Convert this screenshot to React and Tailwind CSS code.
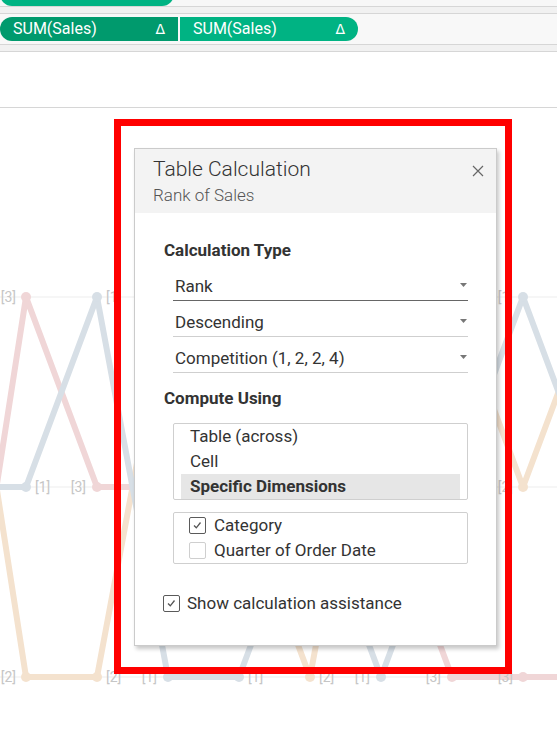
import React from "react";

const T = 189;
const M = 379;
const B = 569;

const xs = [-33, 26, 97, 168, 239, 310, 381, 452, 523, 594];

const series = [
  { name: "orange", color: "#f4e2ce", ys: [T, B, B, T, M, B, T, T, M, T] },
  { name: "red", color: "#f0d6d7", ys: [B, T, M, M, T, T, M, B, B, B] },
  { name: "blue", color: "#d7dfe6", ys: [M, M, T, B, B, M, B, M, T, M] },
];

const labels = [
  [16, T, "[3]", "end"],
  [35, M, "[1]", "start"],
  [16, B, "[2]", "end"],
  [106, T, "[1]", "start"],
  [86, M, "[3]", "end"],
  [106, B, "[2]", "start"],
  [157, B, "[1]", "end"],
  [248, B, "[1]", "start"],
  [319, B, "[2]", "start"],
  [370, B, "[1]", "end"],
  [441, B, "[3]", "end"],
  [513, B, "[3]", "end"],
  [513, T, "[1]", "end"],
  [513, M, "[2]", "end"],
];

const Pill = ({ className }) => (
  <div
    className={`h-[24px] w-[178px] shrink-0 flex items-center justify-between pl-[13px] pr-[13px] text-[16px] text-white ${className}`}
  >
    <span>SUM(Sales)</span>
    <span className="font-['DejaVu_Sans',sans-serif] text-[14px]">Δ</span>
  </div>
);

const Caret = () => (
  <svg width="7" height="4" viewBox="0 0 7 4" className="mb-[2px]">
    <path d="M0 0 L7 0 L3.5 4 Z" fill="#777" />
  </svg>
);

const Check = ({ checked }) => (
  <div
    className={`w-[17px] h-[17px] shrink-0 rounded-[2px] border bg-white flex items-center justify-center ${
      checked ? "border-[#5a5a5a]" : "border-[#cfcfcf]"
    }`}
  >
    {checked && (
      <svg width="15" height="15" viewBox="0 0 15 15">
        <path
          d="M4 7.5 L6.3 9.8 L10.5 4.5"
          fill="none"
          stroke="#555"
          strokeWidth="1.3"
        />
      </svg>
    )}
  </div>
);

const Select = ({ value, active }) => (
  <div
    className={`h-[36px] flex items-end justify-between pb-[4px] pl-[2px] pr-[1px] border-b ${
      active ? "border-[#666]" : "border-[#cfcfcf]"
    }`}
  >
    <span className="leading-[20px]">{value}</span>
    <div className="h-[20px] flex items-center">
      <Caret />
    </div>
  </div>
);

const Chart = () => (
  <svg width="557" height="633" viewBox="0 0 557 633" className="block">
    {[T, M, B].map((y) => (
      <line key={y} x1="0" x2="557" y1={y} y2={y} stroke="#ededed" strokeWidth="1" />
    ))}
    {series.map((s) => (
      <g key={s.name}>
        <polyline
          points={xs.map((x, i) => `${x},${s.ys[i]}`).join(" ")}
          fill="none"
          stroke={s.color}
          strokeWidth="6"
          strokeLinejoin="round"
          strokeLinecap="round"
        />
        {xs.map((x, i) => (
          <circle key={i} cx={x} cy={s.ys[i]} r="5" fill={s.color} />
        ))}
      </g>
    ))}
    {labels.map(([x, y, t, a], i) => (
      <text
        key={i}
        x={x}
        y={y + 5}
        textAnchor={a}
        fontSize="14"
        fill="#c6c6c6"
        fontFamily="Roboto, sans-serif"
      >
        {t}
      </text>
    ))}
  </svg>
);

export default function App() {
  return (
    <div className="w-[557px] h-[741px] overflow-hidden bg-white font-['Roboto','Noto_Sans',sans-serif] text-[#333]">
      {/* shelves */}
      <div className="h-[6px] bg-[#f7f7f7] flex items-end overflow-hidden">
        <div className="h-[24px] w-[174px] shrink-0 rounded-full bg-[#00b383]" />
      </div>
      <div className="h-[7px] bg-[#f1f1f1] border-t border-[#d6d6d6]" />
      <div className="h-[31px] bg-[#f8f8f8] border-t border-[#d6d6d6] pt-[3px] flex gap-[2px]">
        <Pill className="bg-[#009a6d] rounded-l-full" />
        <Pill className="bg-[#00b383] rounded-r-full" />
      </div>
      <div className="h-[7px] bg-[#f1f1f1] border-t border-[#d6d6d6]" />
      <div className="h-[57px] bg-white border-t border-b border-[#d6d6d6]" />

      {/* view */}
      <div className="relative">
        <Chart />

        <div className="absolute left-[134px] top-[40px] w-[363px] bg-white border border-[#cbcbcb] shadow-[2px_3px_4px_rgba(0,0,0,0.22)]">
          <div className="h-[64px] bg-[#f3f3f3] flex justify-between pl-[18px] pr-[12px] pt-[8px]">
            <div>
              <div className="text-[21px] leading-[24px] font-light text-[#333]">Table Calculation</div>
              <div className="mt-[4px] text-[17px] leading-[20px] font-light text-[#555]">Rank of Sales</div>
            </div>
            <svg width="12" height="12" viewBox="0 0 12 12" className="mt-[8px]">
              <path d="M1 1 L11 11 M11 1 L1 11" stroke="#666" strokeWidth="1.2" />
            </svg>
          </div>

          <div className="pl-[28px] pr-[28px] pb-[30px] text-[17px]">
            <div className="mt-[27px] leading-[20px] font-bold pl-[1px]">
              Calculation Type
            </div>
            <div className="mt-[5px] ml-[10px]">
              <Select value="Rank" active />
              <Select value="Descending" />
              <Select value="Competition (1, 2, 2, 4)" />
            </div>

            <div className="mt-[15px] leading-[20px] font-bold pl-[1px]">
              Compute Using
            </div>
            <div className="mt-[15px] ml-[10px] border border-[#cfcfcf] rounded-[2px] px-[7px]">
              <div className="h-[25px] leading-[25px] pl-[9px]">Table (across)</div>
              <div className="h-[25px] leading-[25px] pl-[9px]">Cell</div>
              <div className="h-[25px] leading-[25px] pl-[9px] bg-[#e6e6e6] font-bold">
                Specific Dimensions
              </div>
            </div>

            <div className="mt-[12px] ml-[10px] border border-[#cfcfcf] rounded-[2px] pl-[15px]">
              <div className="h-[25px] flex items-center gap-[8px]">
                <Check checked />
                <span className="leading-[25px]">Category</span>
              </div>
              <div className="h-[25px] flex items-center gap-[8px]">
                <Check />
                <span className="leading-[25px]">Quarter of Order Date</span>
              </div>
            </div>

            <div className="mt-[27px] h-[24px] flex items-center gap-[7px]">
              <Check checked />
              <span className="leading-[24px]">Show calculation assistance</span>
            </div>
          </div>
        </div>

        <div className="absolute left-[114px] top-[11px] w-[398px] h-[555px] border-[7px] border-[#ff0000]" />
      </div>
    </div>
  );
}
